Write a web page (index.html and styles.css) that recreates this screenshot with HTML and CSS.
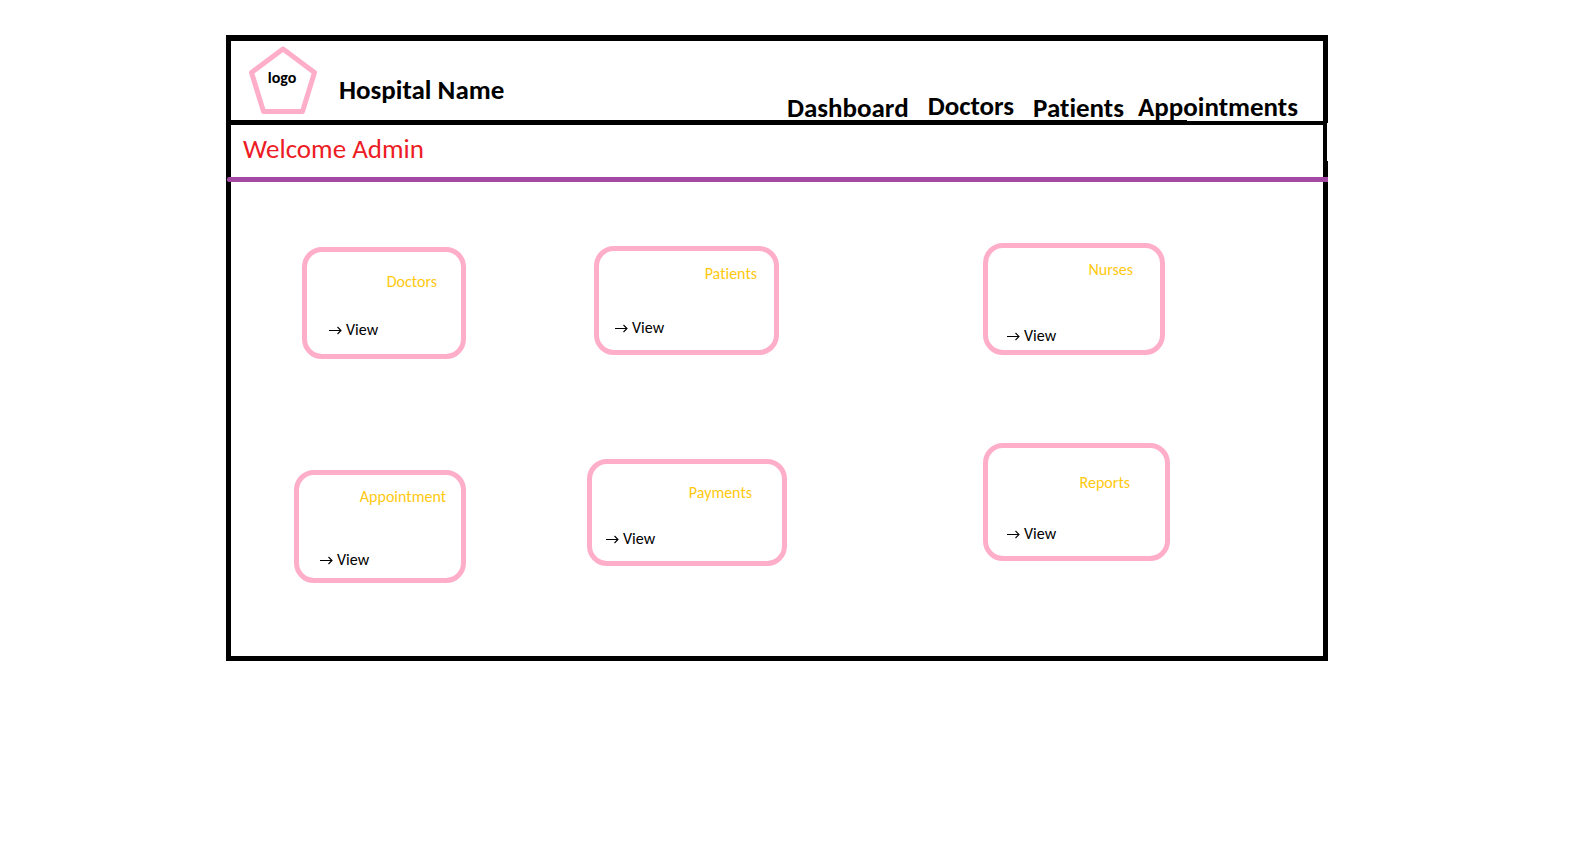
FILE: index.html
```html
<!DOCTYPE html>
<html lang="en">
<head>
<meta charset="utf-8">
<title>Hospital Name</title>
<link rel="stylesheet" href="styles.css">
</head>
<body>
<svg class="defs" aria-hidden="true">
  <symbol id="arrow" viewBox="0 0 13 9"><path d="M0 4.5H12M8.500 1L12 4.500L8.500 8" fill="none" stroke="#000" stroke-width="1.1"/></symbol>
</svg>
<div class="frame">
  <header class="header">
    <div class="logo">
      <svg class="logo-shape" viewBox="0 0 68 68" aria-hidden="true"><path d="M34 3L65.500 26.500L53.500 65.500H14.500L2.500 26.500Z" fill="none" stroke="#ffaec9" stroke-width="5" stroke-linejoin="round"/></svg>
      <span class="logo-text">logo</span>
    </div>
    <h1 class="brand">Hospital Name</h1>
    <nav class="nav">
      <a href="#dashboard">Dashboard</a>
      <a href="#doctors" class="raised">Doctors</a>
      <a href="#patients">Patients</a>
      <a href="#appointments" class="last">Appointments</a>
    </nav>
  </header>
  <p class="welcome">Welcome Admin</p>
  <hr class="divider">
  <main class="cards">
    <section class="card doctors"><h2>Doctors</h2><a href="#doctors"><svg class="arrow" aria-hidden="true"><use href="#arrow"/></svg>View</a></section>
    <section class="card patients"><h2>Patients</h2><a href="#patients"><svg class="arrow" aria-hidden="true"><use href="#arrow"/></svg>View</a></section>
    <section class="card nurses"><h2>Nurses</h2><a href="#nurses"><svg class="arrow" aria-hidden="true"><use href="#arrow"/></svg>View</a></section>
    <section class="card appointment"><h2>Appointment</h2><a href="#appointments"><svg class="arrow" aria-hidden="true"><use href="#arrow"/></svg>View</a></section>
    <section class="card payments"><h2>Payments</h2><a href="#payments"><svg class="arrow" aria-hidden="true"><use href="#arrow"/></svg>View</a></section>
    <section class="card reports"><h2>Reports</h2><a href="#reports"><svg class="arrow" aria-hidden="true"><use href="#arrow"/></svg>View</a></section>
  </main>
</div>
</body>
</html>
```
FILE: styles.css
```css
* { box-sizing: border-box; }
body { margin: 0; background: #fff; color: #000; font-family: Calibri, Carlito, Lato, sans-serif; font-size: 16px; line-height: 20px; font-variant-ligatures: none; }
h1, h2, p { margin: 0; }
a { color: inherit; text-decoration: none; }
.defs { position: absolute; width: 0; height: 0; }

.frame { margin: 35px 266px 0 226px; border: 5px solid #000; border-top-width: 6px; }

.header { position: relative; display: flex; align-items: flex-start; min-height: 84px; padding: 5px 25px 0 18px; border-bottom: 5px solid #000; }
.header::after { content: ""; position: absolute; right: 0; bottom: -1px; width: 136px; height: 1px; background: #fff; }
.logo { display: grid; width: 68px; height: 68px; flex: none; }
.logo-shape { grid-area: 1 / 1; width: 68px; height: 68px; }
.logo-text { grid-area: 1 / 1; justify-self: center; padding: 22px 2px 0 0; font-weight: 700; }
.brand { margin: 28px 0 0 22px; font-size: 27px; line-height: 32px; font-weight: 700; white-space: nowrap; }
.nav { position: relative; z-index: 1; display: flex; gap: 19px; margin: 46px 0 0 auto; font-size: 27px; line-height: 32px; font-weight: 700; height: 28px; }
.nav .raised { margin-top: -2px; }
.nav .last { margin: -1px 0 0 -5px; }

.welcome { position: relative; padding: 8px 12px 12px; font-size: 27px; line-height: 32px; color: #ed1c24; }
.welcome::after { content: ""; position: absolute; top: -2px; right: -5px; width: 1px; height: 38px; background: #fff; }
.divider { position: relative; height: 5px; margin: 0 -5px 0 -4px; border: 0; border-radius: 2px 0 0 2px; background: #a349a4; }

.cards { display: grid; grid-template-columns: 356fr 396fr 340fr; align-items: start; justify-items: start; row-gap: 84px; padding: 61px 0 73px; }
.card { display: flex; flex-direction: column; border: 5px solid #ffaec9; border-radius: 20px; }
.card h2 { align-self: flex-end; font-size: 16px; line-height: 20px; font-weight: 400; color: #ffc90e; }
.card a { display: flex; align-items: center; gap: 4px; }
.arrow { width: 13px; height: 9px; }

.doctors { width: 164px; margin: 4px 0 0 71px; padding: 20px 24px 14px 22px; gap: 28px; }
.patients { width: 185px; margin: 3px 0 0 7px; padding: 13px 17px 12px 16px; gap: 34px; }
.nurses { width: 182px; padding: 12px 27px 4px 19px; gap: 46px; }
.appointment { width: 172px; margin: 27px 0 0 63px; padding: 12px 15px 8px 21px; gap: 43px; }
.payments { width: 200px; margin-top: 16px; padding: 19px 30px 12px 14px; gap: 26px; }
.reports { width: 187px; padding: 25px 35px 12px 19px; gap: 31px; }
```
